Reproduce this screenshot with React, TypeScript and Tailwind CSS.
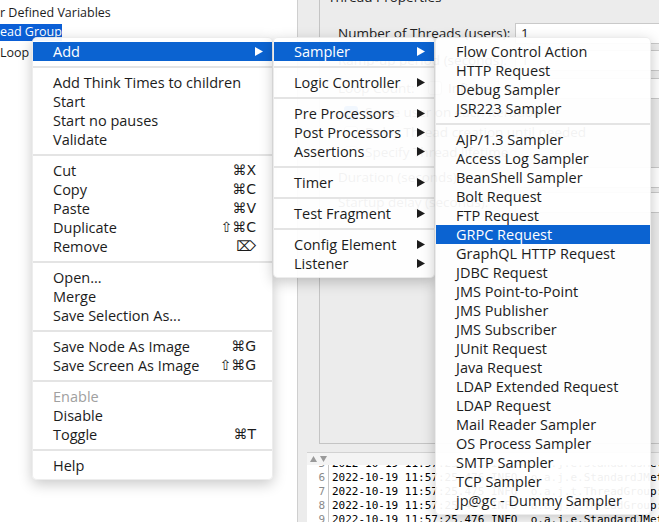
type Entry =
  | 'sep'
  | { label: string; shortcut?: string; sub?: boolean; active?: boolean; disabled?: boolean }

const mainMenu: Entry[] = [
  { label: 'Add', sub: true, active: true },
  'sep',
  { label: 'Add Think Times to children' },
  { label: 'Start' },
  { label: 'Start no pauses' },
  { label: 'Validate' },
  'sep',
  { label: 'Cut', shortcut: '⌘X' },
  { label: 'Copy', shortcut: '⌘C' },
  { label: 'Paste', shortcut: '⌘V' },
  { label: 'Duplicate', shortcut: '⇧⌘C' },
  { label: 'Remove', shortcut: '⌦' },
  'sep',
  { label: 'Open...' },
  { label: 'Merge' },
  { label: 'Save Selection As...' },
  'sep',
  { label: 'Save Node As Image', shortcut: '⌘G' },
  { label: 'Save Screen As Image', shortcut: '⇧⌘G' },
  'sep',
  { label: 'Enable', disabled: true },
  { label: 'Disable' },
  { label: 'Toggle', shortcut: '⌘T' },
  'sep',
  { label: 'Help' },
]

const addMenu: Entry[] = [
  { label: 'Sampler', sub: true, active: true },
  'sep',
  { label: 'Logic Controller', sub: true },
  'sep',
  { label: 'Pre Processors', sub: true },
  { label: 'Post Processors', sub: true },
  { label: 'Assertions', sub: true },
  'sep',
  { label: 'Timer', sub: true },
  'sep',
  { label: 'Test Fragment', sub: true },
  'sep',
  { label: 'Config Element', sub: true },
  { label: 'Listener', sub: true },
]

const samplerMenu: Entry[] = [
  { label: 'Flow Control Action' },
  { label: 'HTTP Request' },
  { label: 'Debug Sampler' },
  { label: 'JSR223 Sampler' },
  'sep',
  { label: 'AJP/1.3 Sampler' },
  { label: 'Access Log Sampler' },
  { label: 'BeanShell Sampler' },
  { label: 'Bolt Request' },
  { label: 'FTP Request' },
  { label: 'GRPC Request', active: true },
  { label: 'GraphQL HTTP Request' },
  { label: 'JDBC Request' },
  { label: 'JMS Point-to-Point' },
  { label: 'JMS Publisher' },
  { label: 'JMS Subscriber' },
  { label: 'JUnit Request' },
  { label: 'Java Request' },
  { label: 'LDAP Extended Request' },
  { label: 'LDAP Request' },
  { label: 'Mail Reader Sampler' },
  { label: 'OS Process Sampler' },
  { label: 'SMTP Sampler' },
  { label: 'TCP Sampler' },
  { label: 'jp@gc - Dummy Sampler' },
]

const logLines = [
  ['5', '2022-10-19 11:57:25.475 INFO  o.a.j.e.StandardJMeterEngine: Running the test!'],
  ['6', '2022-10-19 11:57:25.476 INFO  o.a.j.e.StandardJMeterEngine: Starting ThreadGroup: 1'],
  ['7', '2022-10-19 11:57:25.475 INFO  o.a.j.t.ThreadGroup: Starting thread group... number=1'],
  ['8', '2022-10-19 11:57:25.476 INFO  o.a.j.t.ThreadGroup: Started thread group number 1'],
  ['9', '2022-10-19 11:57:25.476 INFO  o.a.j.e.StandardJMeterEngine: All thread groups have been started'],
]

const Arrow = () => (
  <svg width="8" height="9" viewBox="0 0 8 9" className="shrink-0">
    <path d="M0 0 L8 4.5 L0 9 Z" fill="currentColor" />
  </svg>
)

const Menu = ({ items, className }: { items: Entry[]; className: string }) => (
  <div
    className={`absolute py-[4px] rounded-[5px] bg-white/[0.94] border border-black/[0.07] shadow-[0_4px_14px_rgba(0,0,0,0.22)] ${className}`}
  >
    {items.map((it, i) =>
      it === 'sep' ? (
        <div key={i} className="h-[12px] flex items-center">
          <div className="h-[2px] w-full bg-[#e4e4e4]" />
        </div>
      ) : (
        <div
          key={i}
          className={`h-[19px] flex items-center pl-[20px] pr-[9px] whitespace-nowrap leading-[19px] ${
            it.active ? 'bg-[#0b63d1] text-white' : it.disabled ? 'text-[#a0a0a0]' : 'text-[#1c1c1c]'
          }`}
        >
          <span className="-mt-px">{it.label}</span>
          {it.shortcut && (
            <span className="ml-auto mr-[7px] font-['DejaVu_Sans',sans-serif] text-[14px]">{it.shortcut}</span>
          )}
          {it.sub && (
            <span className="ml-auto">
              <Arrow />
            </span>
          )}
        </div>
      ),
    )}
  </div>
)

const Field = ({ value }: { value?: string }) => (
  <div className="flex-1 h-[21px] bg-white border border-[#c9c9c9] pl-[5px] flex items-center">{value}</div>
)

const Check = ({ checked }: { checked?: boolean }) =>
  checked ? (
    <div className="w-[14px] h-[14px] shrink-0 rounded-[3px] bg-[#1f73e0] flex items-center justify-center">
      <svg width="9" height="8" viewBox="0 0 9 8">
        <path d="M1 4 L3.5 6.5 L8 1" stroke="white" strokeWidth="1.6" fill="none" />
      </svg>
    </div>
  ) : (
    <div className="w-[14px] h-[14px] shrink-0 rounded-[3px] bg-white border border-[#b5b5b5]" />
  )

export default function App() {
  return (
    <div className="relative w-[659px] h-[522px] overflow-hidden flex font-['Open_Sans',sans-serif] text-[14.5px] text-[#1c1c1c]">
      {/* tree */}
      <div className="w-[298px] shrink-0 bg-white border-r border-[#cfcfcf] flex flex-col pt-[4px] text-[12.5px] whitespace-nowrap">
        <div className="h-[18px] flex items-center">r Defined Variables</div>
        <div className="h-[17px] mt-[2px] flex items-center">
          <span className="bg-[#0b5fd6] text-white h-[17px] flex items-center w-[62px]">ead Group</span>
        </div>
        <div className="h-[19px] mt-[3px] flex items-center">Loop Controller</div>
      </div>

      {/* right side */}
      <div className="flex-1 bg-[#ececec] flex flex-col">
        <div className="flex-1 pl-[21px] pb-[8px] flex">
          <div className="flex-1 border-l border-b border-[#c4c4c4] flex flex-col pl-[18px] text-[#222] text-[13.5px] whitespace-nowrap">
            <div className="-mt-[13px] h-[19px] -ml-[10px]">Thread Properties</div>
            <div className="mt-[16px] h-[22px] flex items-center gap-[4px]">
              <span className="w-[173px] shrink-0">Number of Threads (users):</span>
              <Field value="1" />
            </div>
            <div className="mt-[5px] h-[22px] flex items-center gap-[4px]">
              <span className="w-[173px] shrink-0">Ramp-up period (seconds):</span>
              <Field value="1" />
            </div>
            <div className="mt-[6px] h-[22px] flex items-center gap-[6px]">
              <span className="w-[84px] shrink-0">Loop Count:</span>
              <Check />
              <span>Infinite</span>
              <Field value="1" />
            </div>
            <div className="mt-[4px] h-[19px] flex items-center gap-[7px] pl-[6px]">
              <Check checked />
              <span>Same user on each iteration</span>
            </div>
            <div className="mt-px h-[19px] flex items-center gap-[7px] pl-[6px]">
              <Check />
              <span>Delay Thread creation until needed</span>
            </div>
            <div className="mt-px h-[19px] flex items-center gap-[7px] pl-[6px]">
              <Check />
              <span>Specify Thread lifetime</span>
            </div>
            <div className="mt-[4px] h-[22px] flex items-center gap-[4px]">
              <span className="w-[173px] shrink-0">Duration (seconds):</span>
              <Field />
            </div>
            <div className="mt-[3px] h-[22px] flex items-center gap-[4px]">
              <span className="w-[173px] shrink-0">Startup delay (seconds):</span>
              <Field />
            </div>
          </div>
        </div>

        {/* log */}
        <div className="h-[70px] ml-[9px] bg-white flex flex-col border-t border-[#d2d2d2]">
          <div className="h-[12px] shrink-0 bg-[#f4f4f4] flex items-center pl-[3px] gap-[3px] text-[#9a9a9a]">
            <svg width="7" height="6" viewBox="0 0 7 6"><path d="M0 6 L3.5 0 L7 6Z" fill="currentColor" /></svg>
            <svg width="7" height="6" viewBox="0 0 7 6"><path d="M0 0 L3.5 6 L7 0Z" fill="currentColor" /></svg>
          </div>
          <div className="flex-1 overflow-hidden flex font-['DejaVu_Sans_Mono',monospace] text-[11px]">
            <div className="w-[22px] shrink-0 border-r border-[#c8c8c8] text-[#8a8a8a] text-right pr-[3px] -mt-[8px]">
              {logLines.map(([n]) => (
                <div key={n} className="h-[14px] leading-[14px]">{n}</div>
              ))}
            </div>
            <div className="pl-[3px] text-black -mt-[8px] whitespace-pre">
              {logLines.map(([n, t]) => (
                <div key={n} className="h-[14px] leading-[14px]">{t}</div>
              ))}
            </div>
          </div>
        </div>
      </div>

      {/* context menus */}
      <Menu items={mainMenu} className="left-[32px] top-[37px] w-[241px]" />
      <Menu items={addMenu} className="left-[273px] top-[37px] w-[162px]" />
      <Menu items={samplerMenu} className="left-[435px] top-[37px] w-[216px]" />
    </div>
  )
}
